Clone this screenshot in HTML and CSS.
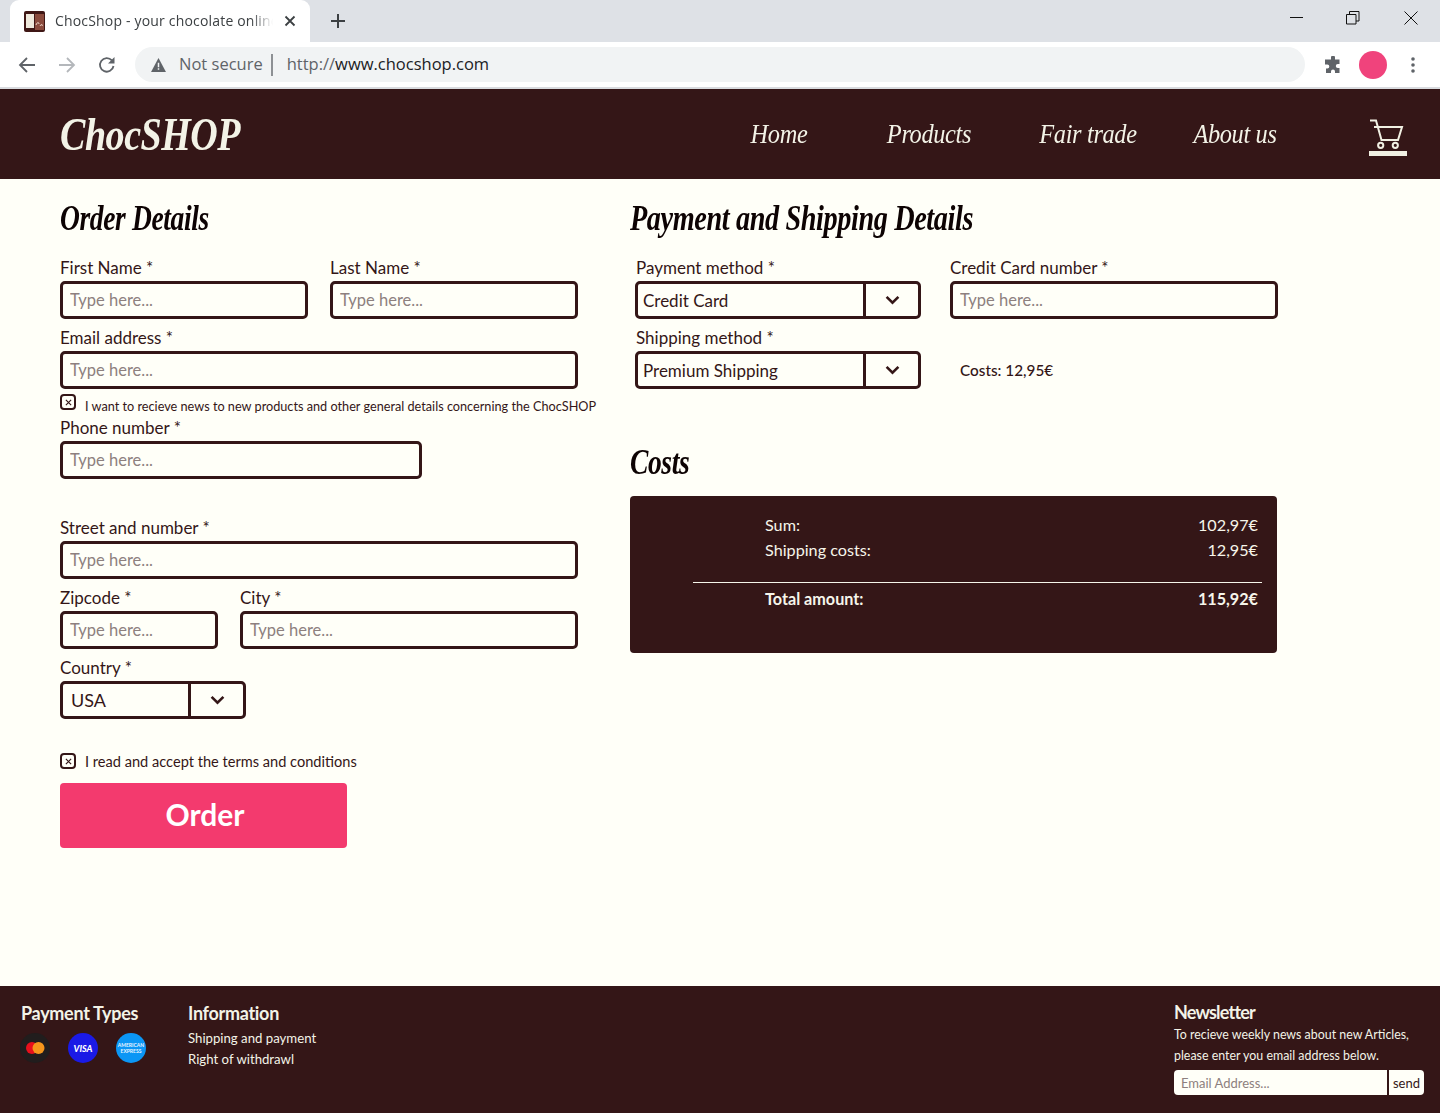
FILE: index.html
```html
<!DOCTYPE html>
<html lang="en">
<head>
<meta charset="utf-8">
<title>ChocShop - your chocolate online shop</title>
<link rel="stylesheet" href="styles.css">
</head>
<body>
<div class="browser">
  <div class="tabbar">
    <div class="tab">
      <svg class="favicon" viewBox="0 0 21 21"><rect width="21" height="21" rx="2" fill="#3f1715"/><rect x="11" y="3" width="9" height="16" fill="#8a4a3c"/><rect x="2" y="3" width="8" height="14" fill="#efe9dc"/><path d="M12 14c1-3 3-3 3-1M16 15c1-2 3-2 2 0" stroke="#f1d9cc" fill="none"/></svg>
      <span class="tab-title">ChocShop - your chocolate online shop</span>
      <svg class="tab-close" viewBox="0 0 12 12"><path d="M1.500 1.500l9 9M10.500 1.500l-9 9" stroke="#3c4043" stroke-width="1.800"/></svg>
    </div>
    <svg class="new-tab" viewBox="0 0 16 16"><path d="M8 1v14M1 8h14" stroke="#3c4043" stroke-width="2"/></svg>
    <div class="win-controls">
      <svg class="win-icon" viewBox="0 0 14 14"><path d="M0 6.500h13" stroke="#111" stroke-width="1"/></svg>
      <svg class="win-icon" viewBox="0 0 14 14"><path d="M.5 3.500h9.500v9.500H.5zM3.500 3.500V.5H13v9.500h-3" stroke="#111" fill="none"/></svg>
      <svg class="win-icon" viewBox="0 0 14 14"><path d="M.5.5l13 13M13.500.5l-13 13" stroke="#111"/></svg>
    </div>
  </div>
  <div class="toolbar">
    <svg class="nav-icon" viewBox="0 0 18 18"><path d="M17 9H2M9 2L2 9l7 7" stroke="#5f6368" stroke-width="1.800" fill="none"/></svg>
    <svg class="nav-icon" viewBox="0 0 18 18"><path d="M1 9h15M9 2l7 7-7 7" stroke="#b4b7bb" stroke-width="1.800" fill="none"/></svg>
    <svg class="nav-icon" viewBox="0 0 18 18"><path d="M15.500 10a6.800 6.800 0 1 1-1.600-5.600" stroke="#5f6368" stroke-width="1.800" fill="none"/><path d="M16.500 1v6.500H10z" fill="#5f6368"/></svg>
    <div class="omnibox">
      <svg class="warn" viewBox="0 0 16 15"><path d="M8 0l8 15H0z" fill="#5f6368"/><path d="M7.200 5h1.600v5H7.200zM7.200 11h1.600v1.700H7.200z" fill="#f1f3f4"/></svg>
      <span class="not-secure">Not secure</span>
      <span class="omni-sep"></span>
      <span class="url"><span class="url-dim">http://</span>www.chocshop.com</span>
    </div>
    <svg class="ext" viewBox="0 0 18 18"><path d="M7 1.500a2 2 0 0 1 4 0V3.500h4.500V8h-1.700a2 2 0 0 0 0 4h1.700v5H11v-1.500a2 2 0 0 0-4 0V17H2v-4.500h1.300a2 2 0 0 0 0-4H1V3.500h6z" fill="#5f6368"/></svg>
    <span class="avatar"></span>
    <svg class="menu-dots" viewBox="0 0 4 16"><circle cx="2" cy="2" r="1.800" fill="#5f6368"/><circle cx="2" cy="8" r="1.800" fill="#5f6368"/><circle cx="2" cy="14" r="1.800" fill="#5f6368"/></svg>
  </div>
</div>

<header class="site-header">
  <div class="logo"><span class="logo-text">ChocSHOP</span></div>
  <nav class="site-nav">
    <a>Home</a>
    <a>Products</a>
    <a>Fair trade</a>
    <a>About us</a>
  </nav>
  <svg class="cart" viewBox="0 0 38 37"><path d="M1 1.500h6L12.500 21H29L33 8H5" stroke="#f1f0e3" stroke-width="2" fill="none"/><circle cx="11.700" cy="26.300" r="2.600" stroke="#f1f0e3" stroke-width="2" fill="none"/><circle cx="26.300" cy="26.300" r="2.600" stroke="#f1f0e3" stroke-width="2" fill="none"/><rect y="32" width="38" height="5" fill="#f1f0e3"/></svg>
</header>

<main class="content">
  <section class="col-left">
    <h1 class="section-title"><span class="title-text">Order Details</span></h1>
    <div class="row row-two">
      <div class="field"><label>First Name *</label><input placeholder="Type here..."></div>
      <div class="field"><label>Last Name *</label><input placeholder="Type here..."></div>
    </div>
    <div class="row">
      <div class="field"><label>Email address *</label><input placeholder="Type here..."></div>
    </div>
    <div class="check-row check-news">
      <span class="check"><svg viewBox="0 0 8 8"><path d="M1 1l6 6M7 1L1 7" stroke="#341617" stroke-width="1.300"/></svg></span>
      <span class="check-small">I want to recieve news to new products and other general details concerning the ChocSHOP</span>
    </div>
    <div class="row row-phone">
      <div class="field"><label>Phone number *</label><input placeholder="Type here..."></div>
    </div>
    <div class="row row-street">
      <div class="field"><label>Street and number *</label><input placeholder="Type here..."></div>
    </div>
    <div class="row row-zip">
      <div class="field"><label>Zipcode *</label><input placeholder="Type here..."></div>
      <div class="field"><label>City *</label><input placeholder="Type here..."></div>
    </div>
    <div class="row row-country">
      <div class="field"><label>Country *</label>
        <div class="select select-country"><span class="select-value">USA</span><span class="select-arrow"><svg viewBox="0 0 14 9"><path d="M1.500 1.500L7 7l5.500-5.500" stroke="#341617" stroke-width="2.400" fill="none"/></svg></span></div>
      </div>
    </div>
    <div class="check-row check-terms">
      <span class="check"><svg viewBox="0 0 8 8"><path d="M1 1l6 6M7 1L1 7" stroke="#341617" stroke-width="1.300"/></svg></span>
      <span class="check-text">I read and accept the terms and conditions</span>
    </div>
    <button class="order-btn">Order</button>
  </section>

  <section class="col-right">
    <h1 class="section-title"><span class="title-text title-wide">Payment and Shipping Details</span></h1>
    <div class="pay-grid">
      <div class="field pay-field"><label>Payment method *</label>
        <div class="select"><span class="select-value">Credit Card</span><span class="select-arrow"><svg viewBox="0 0 14 9"><path d="M1.500 1.500L7 7l5.500-5.500" stroke="#341617" stroke-width="2.400" fill="none"/></svg></span></div>
      </div>
      <div class="field"><label class="label-flush">Credit Card number *</label><input placeholder="Type here..."></div>
      <div class="field pay-field"><label>Shipping method *</label>
        <div class="select"><span class="select-value">Premium Shipping</span><span class="select-arrow"><svg viewBox="0 0 14 9"><path d="M1.500 1.500L7 7l5.500-5.500" stroke="#341617" stroke-width="2.400" fill="none"/></svg></span></div>
      </div>
      <div class="ship-costs">Costs: 12,95€</div>
    </div>
    <h1 class="section-title costs-title"><span class="title-text">Costs</span></h1>
    <div class="cost-panel">
      <div class="cost-row"><span>Sum:</span><span>102,97€</span></div>
      <div class="cost-row"><span>Shipping costs:</span><span>12,95€</span></div>
      <div class="cost-rule"></div>
      <div class="cost-row cost-total"><span>Total amount:</span><span>115,92€</span></div>
    </div>
  </section>
</main>

<footer class="site-footer">
  <div class="foot-pay">
    <h2 class="foot-title">Payment Types</h2>
    <div class="cards">
      <span class="card card-mc"><svg viewBox="0 0 30 30"><circle cx="12" cy="15" r="6" fill="#e7101c"/><circle cx="18.500" cy="15" r="6" fill="#f4961c"/></svg></span>
      <span class="card card-visa">VISA</span>
      <span class="card card-amex">AMERICAN<br>EXPRESS</span>
    </div>
  </div>
  <div class="foot-info">
    <h2 class="foot-title">Information</h2>
    <p class="foot-link">Shipping and payment</p>
    <p class="foot-link">Right of withdrawl</p>
  </div>
  <div class="foot-news">
    <h2 class="foot-title foot-title-news">Newsletter</h2>
    <p class="news-text">To recieve weekly news about new Articles,<br>please enter you email address below.</p>
    <div class="news-form">
      <input class="news-input" placeholder="Email Address...">
      <button class="news-send">send</button>
    </div>
  </div>
</footer>
</body>
</html>
```
FILE: styles.css
```css
* { box-sizing: border-box; }
html, body { margin: 0; padding: 0; }
body {
  width: 1440px;
  height: 1113px;
  overflow: hidden;
  display: flex;
  flex-direction: column;
  background: #fffff8;
  color: #341617;
  font-family: "Lato", "Liberation Sans", sans-serif;
}

/* browser chrome */
.browser { height: 89px; flex: none; border-bottom: 2px solid #d9dbdf; background: #fff; }
.tabbar { height: 42px; background: #dee1e6; display: flex; align-items: flex-end; padding-left: 10px; }
.tab { width: 300px; height: 42px; background: #fff; border-radius: 9px 9px 0 0; display: flex; align-items: center; padding: 0 14px; font-family: "Open Sans", sans-serif; font-size: 14px; color: #3c4043; }
.favicon { width: 21px; height: 21px; flex: none; }
.tab-title { margin: 0 0 2px 10px; width: 218px; white-space: nowrap; overflow: hidden; letter-spacing: .18px; -webkit-mask-image: linear-gradient(90deg, #000 90%, transparent); mask-image: linear-gradient(90deg, #000 90%, transparent); }
.tab-close { width: 12px; height: 12px; margin-left: 11px; flex: none; }
.new-tab { width: 16px; height: 16px; margin: 0 0 13px 20px; flex: none; }
.win-controls { margin-left: auto; align-self: flex-start; display: flex; gap: 44px; padding: 11px 22px 0 0; }
.win-icon { width: 14px; height: 14px; display: block; }
.win-icon:first-child { margin-right: -2px; }
.toolbar { height: 45px; display: flex; align-items: center; padding-left: 18px; }
.nav-icon { width: 18px; height: 18px; margin-right: 22px; flex: none; }
.nav-icon:nth-child(3) { margin-right: 19px; }
.omnibox { width: 1170px; height: 35px; background: #f1f3f4; border-radius: 18px; display: flex; align-items: center; padding-left: 16px; font-family: "Open Sans", sans-serif; color: #5f6368; }
.warn { width: 15px; height: 14px; flex: none; }
.not-secure { margin: 0 0 2px 13px; font-size: 16.500px; }
.omni-sep { width: 2px; height: 22px; background: #8d9094; margin: 0 14px 0 8px; }
.url { color: #202124; font-size: 16.500px; margin-bottom: 2px; }
.url-dim { color: #5f6368; }
.ext { width: 18px; height: 18px; margin-left: 19px; flex: none; }
.avatar { width: 28px; height: 28px; border-radius: 50%; background: #f0437c; margin-left: 17px; flex: none; }
.menu-dots { width: 4px; height: 16px; margin-left: 24px; flex: none; }

/* site header */
.site-header { height: 90px; flex: none; background: #341617; display: flex; align-items: center; padding: 0 33px 0 60px; color: #f3f3e7; font-family: "Liberation Serif", serif; font-style: italic; }
.logo { font-size: 47px; font-weight: 700; letter-spacing: -0.6px; width: 644px; line-height: 90px; }
.logo-text { display: inline-block; transform: scaleX(.81); transform-origin: left center; }
.site-nav { display: grid; grid-template-columns: 150px 150px 168px 126px; text-align: center; font-size: 28px; letter-spacing: -0.4px; }
.site-nav a { display: block; transform: scaleX(.87); }
.cart { width: 38px; height: 37px; margin: 6px 0 0 71px; flex: none; }

/* main */
.content { flex: 1; display: flex; padding-left: 60px; }
.col-left { width: 570px; flex: none; }
.col-right { width: 648px; flex: none; }
.section-title { margin: 0; height: 70px; line-height: 78px; font-family: "Liberation Serif", serif; font-style: italic; font-weight: 700; font-size: 36px; letter-spacing: -0.5px; color: #0d0303; white-space: nowrap; }
.title-text { display: inline-block; transform: scaleX(.765); transform-origin: left center; }
.title-wide { transform: scaleX(.785); }

.row { width: 518px; display: flex; gap: 22px; }
.row-two .field { width: 248px; }
.field { flex: 1; display: flex; flex-direction: column; min-width: 0; }
.field label { height: 32px; line-height: 38px; font-size: 17px; white-space: nowrap; }
.field input { display: block; width: 100%; height: 38px; border: 3px solid #341617; border-radius: 5px; background: #fffff8; padding: 0 7px; font-family: "Lato", sans-serif; font-size: 16.500px; color: #341617; outline: none; }
input::placeholder { color: #8d807e; opacity: 1; }

.check-row { display: flex; align-items: center; }
.check { width: 16px; height: 16px; flex: none; border: 2px solid #341617; border-radius: 4px; display: flex; align-items: center; justify-content: center; }
.check svg { width: 7px; height: 7px; display: block; }
.check-news { height: 20px; align-items: flex-start; padding-top: 5px; white-space: nowrap; }
.check-small { font-size: 12.700px; margin: 3px 0 0 9px; line-height: 18px; }
.row-phone { width: 362px; }
.row-street { margin-top: 30px; }
.row-zip .field:first-child { flex: none; width: 158px; }
.row-country { width: 186px; }
.select { height: 38px; border: 3px solid #341617; border-radius: 5px; display: flex; align-items: center; }
.select-value { flex: 1; padding-left: 5px; font-size: 17px; white-space: nowrap; }
.select-country .select-value { padding-left: 8px; font-size: 18px; }
.select-arrow { width: 55px; height: 100%; flex: none; border-left: 3px solid #341617; display: flex; align-items: center; justify-content: center; }
.select-arrow svg { width: 15px; height: 10px; display: block; }
.check-terms { margin-top: 34px; height: 16px; }
.check-text { font-size: 14.600px; margin-left: 9px; white-space: nowrap; }
.order-btn { display: block; width: 287px; height: 65px; margin-top: 14px; border: 0; border-radius: 4px; background: #f33a6e; color: #fff; font-family: "Lato", sans-serif; font-size: 30px; font-weight: 700; padding: 0 0 3px 3px; }

/* right column */
.pay-grid { display: grid; grid-template-columns: 286px 328px; column-gap: 29px; margin-left: 5px; }
.pay-field label { padding-left: 1px; }
.ship-costs { height: 70px; padding: 32px 0 0 10px; line-height: 38px; font-size: 15.300px; font-weight: 500; }
.costs-title { margin-top: 37px; line-height: 72px; }
.cost-panel { width: 647px; height: 157px; background: #341617; border-radius: 4px; color: #f6f5ea; padding: 16px 15px 0 63px; font-size: 16.200px; }
.cost-row { display: flex; justify-content: space-between; height: 25px; line-height: 25px; padding: 0 4px 0 72px; }
.cost-rule { height: 1px; background: #f6f5ea; margin-top: 20px; }
.cost-total { margin-top: 3px; font-weight: 700; }

/* footer */
.site-footer { height: 127px; flex: none; background: #341617; color: #f3f3e7; display: flex; padding: 15px 16px 0 21px; }
.foot-title { margin: 0; font-size: 18px; font-weight: 700; line-height: 24px; letter-spacing: -0.3px; }
.foot-title-news { letter-spacing: -0.8px; margin-top: -1px; margin-bottom: 1px; }
.foot-pay { width: 167px; flex: none; }
.cards { display: flex; gap: 18px; margin: 8px 0 0 -1px; }
.card { width: 30px; height: 30px; border-radius: 50%; overflow: hidden; display: flex; align-items: center; justify-content: center; text-align: center; }
.card svg { width: 30px; height: 30px; display: block; }
.card-mc { background: #211d1d; }
.card-visa { background: #1a1ae6; color: #fff; font-size: 9px; font-weight: 900; font-style: italic; }
.card-amex { background: #0b96f5; color: #e8f4ff; font-size: 5px; line-height: 6px; font-weight: 700; }
.foot-info { flex: 1; }
.foot-link { margin: 0; font-size: 13.200px; line-height: 21px; }
.foot-info .foot-title { margin-bottom: 3px; }
.foot-news { width: 250px; flex: none; }
.news-text { margin: -1px 0 0; font-size: 12.400px; line-height: 21px; white-space: nowrap; }
.news-form { display: flex; gap: 2px; margin-top: 4px; }
.news-input { width: 213px; height: 25px; border: 0; border-radius: 4px 0 0 4px; background: #fffff8; padding: 0 7px; font-family: "Lato", sans-serif; font-size: 13px; outline: none; }
.news-send { width: 35px; height: 25px; border: 0; border-radius: 0 4px 4px 0; background: #fffff8; padding: 0; font-family: "Lato", sans-serif; font-size: 13px; color: #341617; }
```
